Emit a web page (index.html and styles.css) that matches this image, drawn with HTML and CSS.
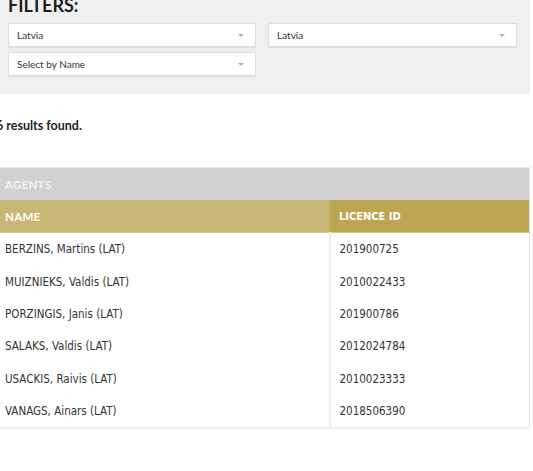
FILE: index.html
```html
<!DOCTYPE html>
<html lang="en">
<head>
    <meta charset="UTF-8">
    <meta name="viewport" content="width=device-width, initial-scale=1.0">
    <title>Agents</title>
    <link rel="stylesheet" href="styles.css">
</head>
<body>
    <div class="page">
        <div class="filters">
            <h2 class="filters-title">FILTERS:</h2>
            <div class="filters-grid">
                <div class="select-box"><span>Latvia</span><i class="arrow"></i></div>
                <div class="select-box"><span>Latvia</span><i class="arrow"></i></div>
                <div class="select-box"><span>Select by Name</span><i class="arrow"></i></div>
            </div>
        </div>

        <p class="results">6 results found.</p>

        <table class="agents">
            <thead>
                <tr class="caption-row"><th colspan="2">AGENTS</th></tr>
                <tr class="head-row">
                    <th class="col-name">NAME</th>
                    <th class="col-id">LICENCE ID</th>
                </tr>
            </thead>
            <tbody>
                <tr><td>BERZINS, Martins (LAT)</td><td>201900725</td></tr>
                <tr><td>MUIZNIEKS, Valdis (LAT)</td><td>2010022433</td></tr>
                <tr><td>PORZINGIS, Janis (LAT)</td><td>201900786</td></tr>
                <tr><td>SALAKS, Valdis (LAT)</td><td>2012024784</td></tr>
                <tr><td>USACKIS, Raivis (LAT)</td><td>2010023333</td></tr>
                <tr><td>VANAGS, Ainars (LAT)</td><td>2018506390</td></tr>
            </tbody>
        </table>
    </div>
</body>
</html>
```

FILE: styles.css
```css
body {
    margin: 0;
    font-family: Lato, "Liberation Sans", sans-serif;
    color: #222;
    background: #fff;
}
.page {
    width: 530px;
    margin-top: -6px;
}
.filters {
    background: #efefef;
    padding: 0 12px 17px 8px;
}
.filters-title {
    margin: 0 0 7px;
    font-size: 18px;
    line-height: 22px;
    font-weight: 700;
    color: #1e1e1e;
}
.filters-grid {
    display: grid;
    grid-template-columns: 248px 249px;
    column-gap: 12px;
    row-gap: 4px;
}
.select-box {
    position: relative;
    height: 25px;
    box-sizing: border-box;
    background: #fff;
    border: 1px solid #dedede;
    border-bottom-width: 2px;
    padding-left: 8px;
    font-size: 10px;
    line-height: 22px;
    color: #333;
}
.select-box .arrow {
    position: absolute;
    right: 11px;
    top: 10px;
    border-left: 3px solid transparent;
    border-right: 3px solid transparent;
    border-top: 3px solid #b0b0b0;
}
.results {
    margin: 23px 0 0 -4px;
    font-size: 12.5px;
    line-height: 18px;
    font-weight: 700;
    color: #222;
}
.agents {
    margin-top: 32px;
    width: 530px;
    border-collapse: collapse;
    border-top: 1px solid #e6e6e6;
    border-right: 1px solid #e8e8e8;
    border-bottom: 2px solid #eeeeee;
    font-family: Tahoma, "DejaVu Sans Condensed", "DejaVu Sans", sans-serif;
    font-size: 11.5px;
    color: #333;
}
.agents th {
    text-align: left;
    color: #fff;
    font-size: 11px;
    padding: 0 5px;
    height: 32px;
}
.caption-row th {
    background: #d1d1d1;
    font-family: Lato, "Liberation Sans", sans-serif;
    font-size: 11.5px;
    letter-spacing: 0.3px;
    color: #f3f3f3;
}
.head-row th {
    border-bottom: 1px solid #d6c897;
}
.head-row .col-name {
    width: 319px;
    background: #c9b775;
    font-family: Lato, "Liberation Sans", sans-serif;
    font-size: 11.5px;
    letter-spacing: 0.3px;
}
.head-row .col-id {
    background: #bea552;
    padding-left: 9px;
    border-left: 1px solid #c3ad62;
}
.agents td {
    height: 32.4px;
    padding: 0 5px;
}
.agents td + td {
    padding-left: 9px;
    border-left: 2px solid #eeeeee;
}
```
